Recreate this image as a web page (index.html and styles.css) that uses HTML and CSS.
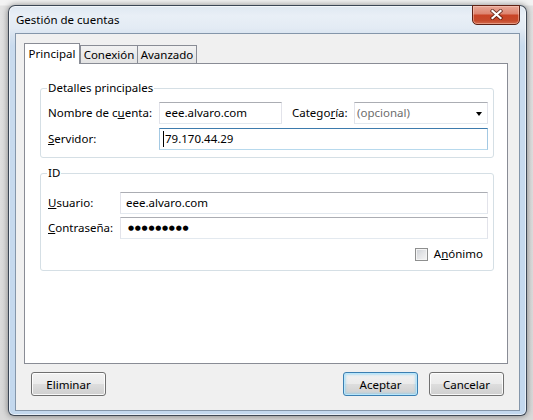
FILE: index.html
```html
<!DOCTYPE html>
<html lang="es">
<head>
<meta charset="utf-8">
<title>Gestión de cuentas</title>
<link rel="stylesheet" href="styles.css">
</head>
<body>
<div class="desktop">
  <div class="window">
    <div class="titlebar">
      <span class="title">Gestión de cuentas</span>
    </div>
    <button class="close" type="button" aria-label="Cerrar">
      <svg width="13" height="11" viewBox="0 0 13 11">
        <path d="M2.5 2 L10.5 9 M10.5 2 L2.5 9" stroke="rgba(70,20,10,0.75)" stroke-width="3.8" stroke-linecap="square" fill="none"/>
        <path d="M2.5 2 L10.5 9 M10.5 2 L2.5 9" stroke="#ffffff" stroke-width="2.2" stroke-linecap="square" fill="none"/>
      </svg>
    </button>
    <div class="client">
      <div class="tabs">
        <div class="tab active">Principal</div>
        <div class="tab t2">Conexión</div>
        <div class="tab t3">Avanzado</div>
      </div>
      <div class="panel">
        <fieldset class="group g1">
          <legend>Detalles principales</legend>
          <div class="row">
            <label class="lbl w1">Nombre de c<u>u</u>enta:</label>
            <div class="field account">eee.alvaro.com</div>
            <label class="lbl cat">Catego<u>r</u>ía:</label>
            <div class="field combo"><span class="placeholder">(opcional)</span><span class="arrow"></span></div>
          </div>
          <div class="row">
            <label class="lbl w1"><u>S</u>ervidor:</label>
            <div class="field grow focus"><span class="caret"></span>79.170.44.29</div>
          </div>
        </fieldset>
        <fieldset class="group g2">
          <legend>ID</legend>
          <div class="row">
            <label class="lbl w2"><u>U</u>suario:</label>
            <div class="field grow">eee.alvaro.com</div>
          </div>
          <div class="row r2">
            <label class="lbl w2"><u>C</u>ontraseña:</label>
            <div class="field grow"><span class="dots">●●●●●●●●●</span></div>
          </div>
          <div class="checkrow">
            <span class="checkbox"></span>
            <span class="checklabel">A<u>n</u>ónimo</span>
          </div>
        </fieldset>
      </div>
      <div class="actions">
        <button class="btn" type="button">Eliminar</button>
        <button class="btn default" type="button">Aceptar</button>
        <button class="btn cancel" type="button">Cancelar</button>
      </div>
    </div>
  </div>
</div>
</body>
</html>
```
FILE: styles.css
```css
* {
  box-sizing: border-box;
}

html,
body {
  margin: 0;
  padding: 0;
}

body {
  width: 533px;
  height: 420px;
  overflow: hidden;
  background: linear-gradient(to bottom, #f3f3f3 0, #f3f3f3 5px, #e2e2e2 6px, #d9d9d9 100%);
  font-family: "Noto Sans", "Open Sans", sans-serif;
  font-size: 11.5px;
  color: #000;
}

.desktop {
  padding: 5px 0 0 8px;
}

.window {
  position: relative;
  width: 519px;
  height: 411px;
  border: 1px solid rgba(35, 45, 58, 0.85);
  border-radius: 7px 7px 6px 6px;
  background: linear-gradient(to bottom, #dfe8f2 0, #e9eff6 10px, #e3ebf4 22px, #d6e2ef 30px, #c9dbee 40px, #c3d8ee 100%);
  padding: 0 6px 4px 6px;
  display: flex;
  flex-direction: column;
  box-shadow: 0 0 6px rgba(0, 0, 0, 0.45), inset 0 0 0 1px rgba(255, 255, 255, 0.6);
}

.titlebar {
  height: 27px;
  display: flex;
  align-items: center;
  padding-left: 1px;
}

.title {
  line-height: 16px;
  font-size: 11.5px;
}

.close {
  position: absolute;
  top: -1px;
  right: 6px;
  width: 48px;
  height: 20px;
  padding: 0;
  border: 1px solid #5e2114;
  border-radius: 0 0 5px 5px;
  background: linear-gradient(to bottom, #e8a797 0%, #de8671 42%, #c94426 52%, #c64a2b 80%, #d2694c 100%);
  box-shadow: inset 0 0 0 1px rgba(255, 215, 200, 0.45);
  display: flex;
  align-items: center;
  justify-content: center;
}

.close svg {
  display: block;
  margin-top: -1px;
}

.client {
  width: 505px;
  height: 378px;
  border: 1px solid #8496aa;
  background: #f0f0f0;
  padding-top: 9px;
  display: flex;
  flex-direction: column;
}

.tabs {
  display: flex;
  align-items: flex-end;
  margin-left: 8px;
  height: 21px;
  margin-bottom: -1px;
  position: relative;
  z-index: 1;
}

.tab {
  height: 18px;
  margin-bottom: 1px;
  border: 1px solid #898c95;
  border-bottom: none;
  background: linear-gradient(to bottom, #f2f2f2, #e3e3e3);
  display: flex;
  align-items: center;
  justify-content: center;
  line-height: 16px;
  white-space: nowrap;
}

.tab.active {
  width: 56px;
  height: 21px;
  margin-bottom: 0;
  background: #fff;
}

.tab.t2 {
  width: 58px;
}

.tab.t3 {
  width: 60px;
  margin-left: -1px;
}

.panel {
  margin-left: 8px;
  width: 484px;
  height: 301px;
  border: 1px solid #898c95;
  background: #fff;
  padding: 0 13px 0 15px;
}

.group {
  border: 1px solid #d5dfe5;
  border-radius: 3px;
  margin: 0;
  min-width: 0;
  padding: 6px 5px 7px 7px;
}

.group legend {
  padding: 0 1px;
  margin-left: -1px;
  line-height: 16px;
}

.g1 {
  margin-top: 16px;
}

.g2 {
  margin-top: 7px;
  padding-top: 11px;
  padding-bottom: 8px;
}

.row {
  display: flex;
  align-items: center;
  height: 22px;
}

.row + .row {
  margin-top: 4px;
}

.row.r2 {
  margin-top: 3px;
}

.lbl {
  line-height: 16px;
  white-space: nowrap;
  flex: none;
}

.lbl.w1 {
  width: 111px;
}

.lbl.w2 {
  width: 72px;
}

.lbl.cat {
  width: 62px;
  margin-left: 10px;
}

.field {
  height: 22px;
  border: 1px solid;
  border-color: #abadb3 #e2e3ea #e3e9ef #e2e3ea;
  background: #fff;
  padding: 0 5px;
  display: flex;
  align-items: center;
  line-height: 16px;
  white-space: nowrap;
}

.field.account {
  width: 123px;
  flex: none;
}

.field.grow {
  flex: 1;
}

.field.focus {
  border-color: #3d7bad #a4c9e3 #b7d9ed #a4c9e3;
  padding-left: 3px;
}

.caret {
  display: inline-block;
  width: 1px;
  height: 16px;
  background: #000;
  margin-right: 1px;
}

.field.combo {
  flex: 1;
  padding: 0 5px 0 2px;
}

.placeholder {
  color: #6d6d6d;
}

.arrow {
  margin-left: auto;
  width: 0;
  height: 0;
  border-left: 3.5px solid transparent;
  border-right: 3.5px solid transparent;
  border-top: 4px solid #000;
  margin-top: 1px;
}

.dots {
  font-family: "DejaVu Sans", sans-serif;
  font-size: 7px;
  letter-spacing: 0.7px;
  padding-left: 2px;
}

.checkrow {
  display: flex;
  align-items: center;
  justify-content: flex-end;
  height: 16px;
  margin-top: 7px;
  padding-right: 5px;
}

.checkbox {
  width: 13px;
  height: 13px;
  border: 1px solid #8e8f8f;
  background: linear-gradient(135deg, #cbcfd5 0%, #e4e5e7 50%, #f5f5f5 100%);
  box-shadow: inset 0 0 0 1px #f4f4f4;
  margin-right: 6px;
}

.checklabel {
  line-height: 16px;
}

.actions {
  display: flex;
  margin: 8px 15px 0 15px;
}

.btn {
  width: 75px;
  height: 24px;
  padding: 0;
  font-family: inherit;
  font-size: 11.5px;
  color: #000;
  border: 1px solid #707070;
  border-radius: 3px;
  background: linear-gradient(to bottom, #f2f2f2 0%, #ebebeb 48%, #dddddd 52%, #cfcfcf 100%);
  box-shadow: inset 0 0 0 1px rgba(255, 255, 255, 0.85);
}

.btn.default {
  margin-left: auto;
  border-color: #3c7fb1;
  box-shadow: inset 0 0 0 1px #b8e6fb, inset 0 0 2px 2px rgba(120, 205, 245, 0.45);
}

.btn.cancel {
  margin-left: 11px;
}
```
